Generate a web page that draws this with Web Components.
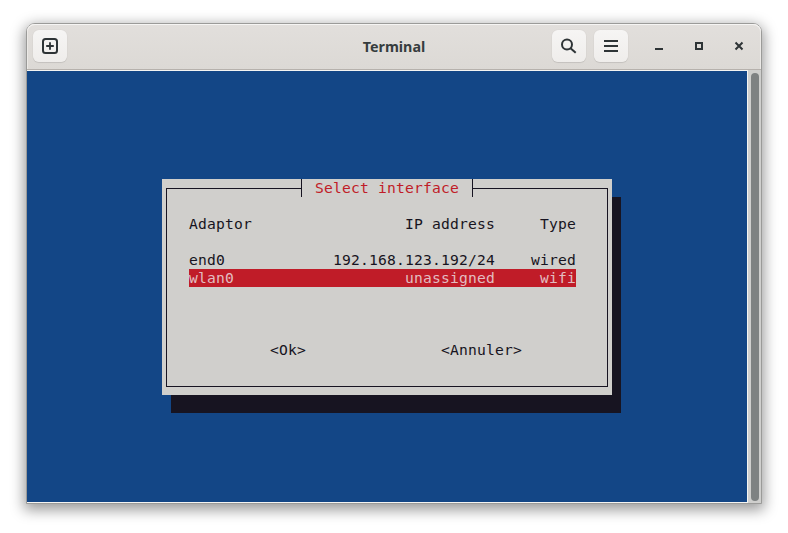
<!DOCTYPE html>
<html lang="fr"><head><meta charset="utf-8"><title>Terminal</title>
<style>
html,body{margin:0;background:#fff}
body{padding:23px 26px 29px;height:481px}
</style></head>
<body>
<gnome-window title="Terminal">
  <header-button slot="start"><svg width="16" height="16" viewBox="0 0 16 16" fill="none" stroke="#2e3436" stroke-width="2"><rect x="1" y="1" width="14" height="14" rx="2.5"/><path d="M8 4.2v7.6M4.2 8h7.6" stroke-width="1.8"/></svg></header-button>
  <header-button slot="end"><svg width="16" height="16" viewBox="0 0 16 16" fill="none" stroke="#2e3436" stroke-width="2"><circle cx="6" cy="6.5" r="5"/><path d="M9.5 10.2l5.2 4.6"/></svg></header-button>
  <header-button slot="end"><svg width="16" height="16" viewBox="0 0 16 16" fill="#2e3436"><rect x="1" y="2" width="14" height="2"/><rect x="1" y="7" width="14" height="2"/><rect x="1" y="12" width="14" height="2"/></svg></header-button>
  <term-dialog heading="Select interface">
    <iface-row><span>Adaptor</span><span>IP address</span><span>Type</span></iface-row>
    <iface-row></iface-row>
    <iface-row><span>end0</span><span>192.168.123.192/24</span><span>wired</span></iface-row>
    <iface-row selected><span>wlan0</span><span>unassigned</span><span>wifi</span></iface-row>
    <dialog-actions slot="actions"><span>&lt;Ok&gt;</span><span>&lt;Annuler&gt;</span></dialog-actions>
  </term-dialog>
</gnome-window>
<script>
const def=(name,html)=>customElements.define(name,class extends HTMLElement{
  constructor(){super();this.attachShadow({mode:'open'}).innerHTML=html;}
  connectedCallback(){
    this.shadowRoot.querySelectorAll('[data-attr]').forEach(n=>n.textContent=this.getAttribute(n.dataset.attr)||'');
  }
});
def('gnome-window',`<style>
:host{display:flex;flex-direction:column;width:736px;height:481px;box-sizing:border-box;border:1px solid #9b9b99;border-radius:9px 9px 0 0;background:#cfcfcd;box-shadow:0 4px 14px 2px rgba(0,0,0,.4)}
.bar{flex:none;height:46px;box-sizing:border-box;border-bottom:1px solid #b6b1ac;border-radius:8px 8px 0 0;background:linear-gradient(#e2dfdc,#dcd9d5);box-shadow:inset 0 1px #f6f5f4,inset 1px 0 #ebe9e6,inset -1px 0 #ebe9e6;display:flex;align-items:flex-start;padding:6px 0 0 6px;position:relative}
.title{position:absolute;left:0;right:0;top:0;height:45px;display:flex;align-items:center;justify-content:center;font:700 14.3px "Noto Sans","Open Sans",sans-serif;color:#363c3e}
.end{margin-left:auto;display:flex;gap:8px}
.wc{display:flex;margin:0 2px 0 11px;width:120px;height:32px}
.wc span{flex:1;display:flex;align-items:center;justify-content:center}
.body{flex:1;display:flex;min-height:0}
.term{flex:none;width:721px;background:#134686;border:solid #f4f4f2;border-width:1px 1px 1px 0;display:flex;flex-direction:column;padding-top:108px;padding-left:135px;box-sizing:border-box}
.sb{flex:1;display:flex;justify-content:center;padding:3px 0 2px}
.sb i{display:block;width:8px;background:#7e8282;border-radius:4px;margin-left:1px}
</style>
<div class="bar"><slot name="start"></slot><div class="title" data-attr="title"></div>
<div class="end"><slot name="end"></slot></div>
<div class="wc">
<span><svg width="10" height="10" viewBox="0 0 10 10"><rect x="1" y="7" width="8" height="2" fill="#2e3436"/></svg></span>
<span><svg width="10" height="10" viewBox="0 0 10 10" fill="none" stroke="#2e3436" stroke-width="2"><rect x="2" y="2" width="6" height="6"/></svg></span>
<span><svg width="10" height="10" viewBox="0 0 10 10" fill="none" stroke="#2e3436" stroke-width="2"><path d="M1.5 1.5l7 7M8.5 1.5l-7 7"/></svg></span>
</div></div>
<div class="body"><div class="term"><slot></slot></div><div class="sb"><i></i></div></div>`);
def('header-button',`<style>
:host{display:flex;align-items:center;justify-content:center;width:34px;height:32px;box-sizing:border-box;border-radius:6px;background:linear-gradient(#f6f5f4,#efedeb);box-shadow:0 1px 1px rgba(0,0,0,.1),0 0 1px rgba(0,0,0,.12)}
</style><slot></slot>`);
def('term-dialog',`<style>
:host{display:block;width:450px;height:216px;box-sizing:border-box;background:#d0cfcc;box-shadow:9px 18px 0 #171421;padding:9px 4px 8px 4px;color:#171421;font:14.67px/18px "DejaVu Sans Mono",monospace;letter-spacing:.17px;white-space:pre}
.frame{height:199px;box-sizing:border-box;border:1px solid #171421;padding:26px 31px 0 22px;position:relative;display:flex;flex-direction:column}
.title{position:absolute;left:134px;top:-10px;height:18px;padding:0 13px;border:solid #171421;border-width:0 1px;color:#c01c28;background:#d0cfcc;}
.actions{margin-top:54px}
</style><div class="frame"><div class="title" data-attr="heading"></div><slot></slot><div class="actions"><slot name="actions"></slot></div></div>`);
def('iface-row',`<style>
:host{display:grid;grid-template-columns:63px 243px 81px;height:18px;line-height:18px}
:host([selected]){background:#c01c28;color:#e3bcc0}
::slotted(span:nth-child(n+2)){text-align:right}
</style><slot></slot>`);
def('dialog-actions',`<style>
:host{display:flex;height:18px;padding-left:81px}
::slotted(span:last-child){margin-left:135px}
</style><slot></slot>`);
</script>
</body></html>
